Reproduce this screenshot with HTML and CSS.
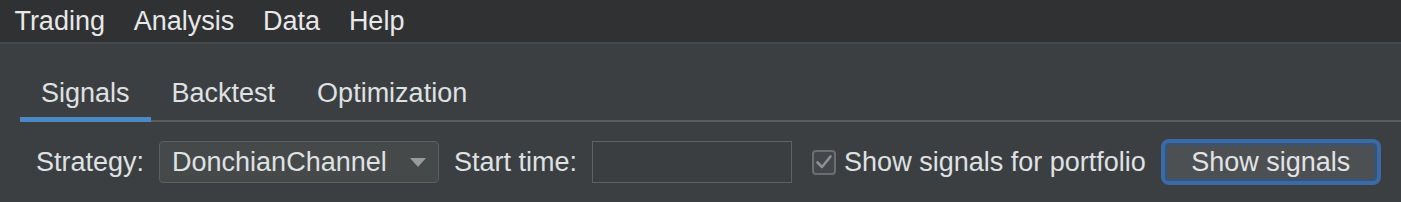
FILE: index.html
```html
<!DOCTYPE html>
<html lang="en">
<head>
<meta charset="utf-8">
<title>Trading</title>
<link rel="stylesheet" href="styles.css">
</head>
<body>
<div class="app">
  <nav class="menubar">
    <span class="menu-item">Trading</span>
    <span class="menu-item">Analysis</span>
    <span class="menu-item">Data</span>
    <span class="menu-item">Help</span>
  </nav>
  <div class="tabpane">
    <div class="tab-header">
      <div class="tab selected">Signals</div>
      <div class="tab">Backtest</div>
      <div class="tab">Optimization</div>
    </div>
    <div class="controls">
      <span class="label">Strategy:</span>
      <div class="combo">
        <span class="combo-value">DonchianChannel</span>
        <span class="combo-arrow"></span>
      </div>
      <span class="label">Start time:</span>
      <div class="textfield"></div>
      <label class="check">
        <span class="check-box">
          <svg width="20" height="20" viewBox="0 0 20 20"><path d="M3.5 10.5 L8 15 L16.5 4.5" fill="none" stroke="#8e9092" stroke-width="2.6" stroke-linecap="round" stroke-linejoin="round"/></svg>
        </span>
        <span class="label">Show signals for portfolio</span>
      </label>
      <button class="button">Show signals</button>
    </div>
  </div>
</div>
</body>
</html>
```

FILE: styles.css
```css
html, body {
  margin: 0;
  padding: 0;
}

body {
  width: 1401px;
  height: 202px;
  overflow: hidden;
  background: #3c3f41;
  font-family: "Liberation Sans", Arial, sans-serif;
  font-size: 27px;
  color: #dfe1e3;
}

.menubar {
  display: flex;
  height: 42px;
  line-height: 42px;
  background: #2f3133;
  border-bottom: 2px solid #46494c;
}

.menu-item {
  padding: 0 14.4px;
  color: #e8e8e8;
}

.tabpane {
  padding: 26px 0 0 20px;
}

.tab-header {
  display: flex;
  border-bottom: 2px solid #5a5d60;
}

.tab {
  padding: 8px 21px 9px;
  line-height: 30px;
  border-bottom: 5px solid transparent;
  margin-bottom: -2px;
  color: #dfe1e3;
}

.tab.selected {
  border-bottom-color: #4a88c7;
}

.controls {
  display: flex;
  align-items: center;
  gap: 15px;
  padding: 19px 0 0 16px;
}

.label {
  line-height: 30px;
  white-space: nowrap;
}

.combo {
  box-sizing: border-box;
  width: 280px;
  height: 42px;
  display: flex;
  align-items: center;
  justify-content: space-between;
  padding: 0 12px 0 12px;
  background: #45494a;
  border: 1px solid #5c5f61;
  border-radius: 4px;
}

.combo-value {
  line-height: 30px;
  color: #dfe1e3;
}

.combo-arrow {
  width: 0;
  height: 0;
  border-left: 8px solid transparent;
  border-right: 8px solid transparent;
  border-top: 9px solid #9a9a9a;
}

.textfield {
  box-sizing: border-box;
  width: 200px;
  height: 42px;
  background: #3b3e40;
  border: 1px solid #5f6264;
}

.check {
  display: flex;
  align-items: center;
  gap: 8px;
  margin-left: 5px;
}

.check-box {
  box-sizing: border-box;
  width: 24px;
  height: 25px;
  display: flex;
  align-items: center;
  justify-content: center;
  background: #43464a;
  border: 2px solid #6b6e70;
  border-radius: 4px;
}

.check-box svg {
  display: block;
}

.button {
  box-sizing: border-box;
  width: 212px;
  height: 38px;
  margin-left: 4px;
  padding: 0;
  font-family: inherit;
  font-size: 27px;
  line-height: 30px;
  color: #e2e3e5;
  background: #4c5052;
  border: 2px solid #2f5580;
  border-radius: 4px;
  box-shadow: 0 0 0 4px #3c6aa5;
}
```
